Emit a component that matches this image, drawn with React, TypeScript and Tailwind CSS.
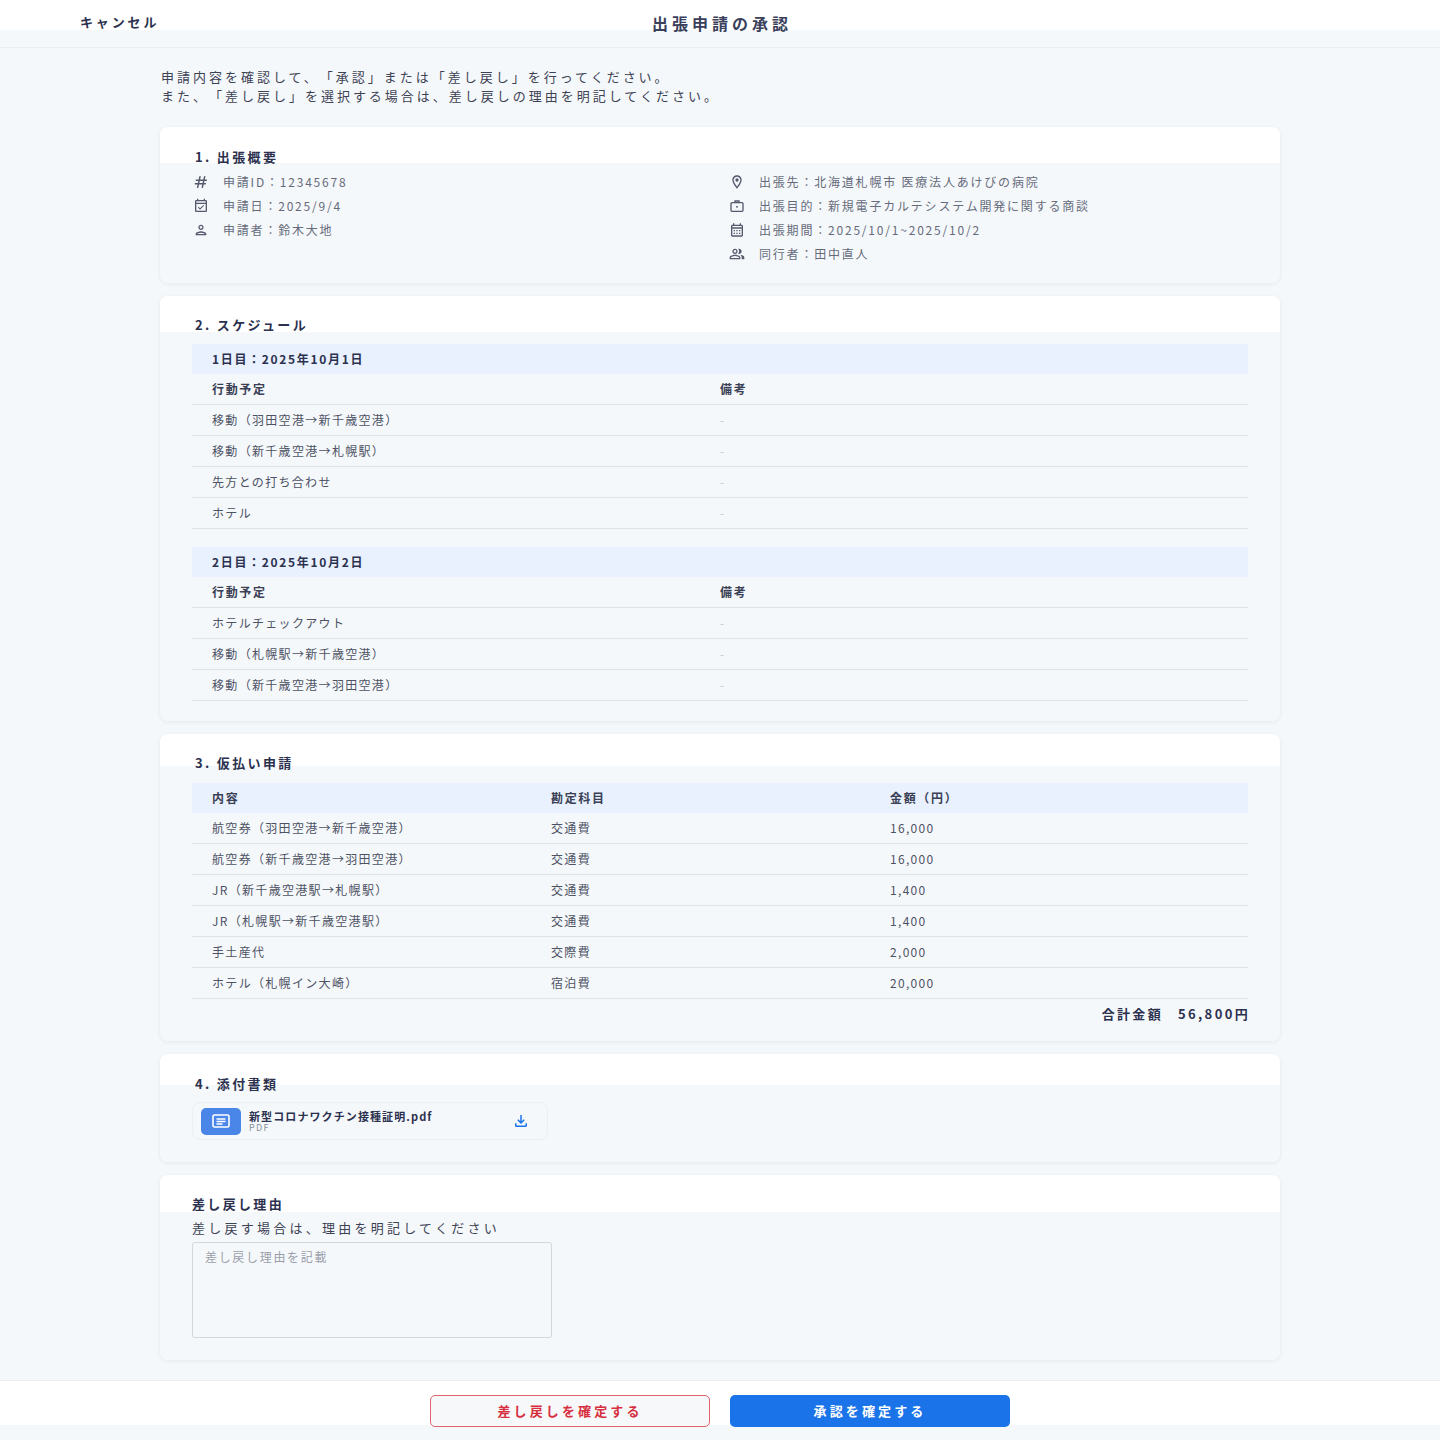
import type { ReactNode } from "react";
import {
  MdOutlineEventAvailable,
  MdOutlinePerson,
  MdOutlineLocationOn,
  MdOutlineCalendarMonth,
  MdOutlinePeopleAlt,
  MdOutlineFileDownload,
} from "react-icons/md";

const HashIcon = () => (
  <svg width="16" height="16" viewBox="0 0 24 24" fill="none" stroke="currentColor" strokeWidth="2.2" strokeLinecap="round">
    <path d="M10.5 4 7 20M17.5 4 14 20M5 9.5h15M3.5 14.5h15" />
  </svg>
);

const BriefcaseIcon = () => (
  <svg width="16" height="16" viewBox="0 0 24 24" fill="none" stroke="currentColor" strokeWidth="2">
    <rect x="3" y="7" width="18" height="13" rx="1.5" />
    <path d="M9 7V4.5h6V7" />
    <rect x="10.8" y="12" width="2.4" height="2.4" fill="currentColor" stroke="none" />
  </svg>
);

const DocIcon = () => (
  <svg width="18" height="14" viewBox="0 0 18 14" fill="none" stroke="#ffffff" strokeWidth="1.6">
    <rect x="1" y="1" width="16" height="12" rx="1.5" />
    <path d="M4.5 5h9M4.5 7.5h9M4.5 10h6" />
  </svg>
);

const Card = ({ className, children }: { className: string; children: ReactNode }) => (
  <section className={`rounded-lg px-8 shadow-[0_1px_4px_rgba(15,23,42,0.07)] ${className}`}>{children}</section>
);

const Heading = ({ children, offset = true }: { children: ReactNode; offset?: boolean }) => (
  <h2 className={`text-[13px] leading-[18px] font-bold tracking-[0.18em] text-[#2c3150] ${offset ? "pl-[3px]" : ""}`}>
    {children}
  </h2>
);

const InfoRow = ({ icon, text }: { icon: ReactNode; text: string }) => (
  <div className="flex h-[24px] items-center gap-[14px] pl-[1px]">
    <span className="flex w-4 justify-center text-[#555a6e]">{icon}</span>
    <span className="text-[12px] tracking-[0.15em] text-[#666b7c]">{text}</span>
  </div>
);

const day1 = ["移動（羽田空港→新千歳空港）", "移動（新千歳空港→札幌駅）", "先方との打ち合わせ", "ホテル"];
const day2 = ["ホテルチェックアウト", "移動（札幌駅→新千歳空港）", "移動（新千歳空港→羽田空港）"];

const expenses = [
  ["航空券（羽田空港→新千歳空港）", "交通費", "16,000"],
  ["航空券（新千歳空港→羽田空港）", "交通費", "16,000"],
  ["JR（新千歳空港駅→札幌駅）", "交通費", "1,400"],
  ["JR（札幌駅→新千歳空港駅）", "交通費", "1,400"],
  ["手土産代", "交際費", "2,000"],
  ["ホテル（札幌イン大崎）", "宿泊費", "20,000"],
];

const DayTable = ({ title, rows }: { title: string; rows: string[] }) => (
  <div>
    <div className="flex h-[30px] items-center bg-[#e8f1fd] pl-5 text-[12px] font-bold tracking-[0.14em] text-[#2c3150]">
      {title}
    </div>
    <div className="grid h-[31px] grid-cols-[528px_1fr] items-center border-b border-[#e3e1e7] text-[12px] font-bold tracking-[0.14em] text-[#3a3f55]">
      <span className="pl-5">行動予定</span>
      <span>備考</span>
    </div>
    {rows.map((r) => (
      <div
        key={r}
        className="grid h-[31px] grid-cols-[528px_1fr] items-center border-b border-[#e3e1e7] text-[12px] tracking-[0.11em] text-[#4d5265]"
      >
        <span className="pl-5">{r}</span>
        <span className="text-[#c4c7cf]">-</span>
      </div>
    ))}
  </div>
);

export default function App() {
  return (
    <div className="min-h-screen bg-[#f5f8fa] font-['Noto_Sans_CJK_JP','Noto_Sans',sans-serif] text-[#3d4255] [text-spacing-trim:space-all]">
      <header className="grid h-[47px] grid-cols-[1fr_auto_1fr] bg-[linear-gradient(to_bottom,#ffffff_30px,#f5f8fa_30px)] shadow-[0_1px_0_#eceff2]">
        <div className="pl-[80px] pt-[12px] text-[13px] leading-[20px] font-bold tracking-[0.22em] text-[#2c3150]">
          キャンセル
        </div>
        <h1 className="pl-[4px] pt-[12px] text-[16px] leading-[22px] font-bold tracking-[0.25em] text-[#3a3f5c]">
          出張申請の承認
        </h1>
        <div />
      </header>

      <main className="mx-auto w-[1120px] pt-[20px]">
        <p className="pl-[1px] text-[13px] leading-[19px] tracking-[0.23em] text-[#3d4255]">
          申請内容を確認して、「承認」または「差し戻し」を行ってください。
          <br />
          また、「差し戻し」を選択する場合は、差し戻しの理由を明記してください。
        </p>

        <div className="mt-[22px] flex flex-col gap-[13px]">
          <Card className="bg-[linear-gradient(to_bottom,#ffffff_36px,#f5f8fa_36px)] pt-[21px] pb-[17px]">
            <Heading>1. 出張概要</Heading>
            <div className="mt-1 grid grid-cols-2 gap-x-4">
              <div>
                <InfoRow icon={<HashIcon />} text="申請ID：12345678" />
                <InfoRow icon={<MdOutlineEventAvailable size={16} />} text="申請日：2025/9/4" />
                <InfoRow icon={<MdOutlinePerson size={16} />} text="申請者：鈴木大地" />
              </div>
              <div>
                <InfoRow icon={<MdOutlineLocationOn size={16} />} text="出張先：北海道札幌市 医療法人あけびの病院" />
                <InfoRow icon={<BriefcaseIcon />} text="出張目的：新規電子カルテシステム開発に関する商談" />
                <InfoRow icon={<MdOutlineCalendarMonth size={16} />} text="出張期間：2025/10/1~2025/10/2" />
                <InfoRow icon={<MdOutlinePeopleAlt size={16} />} text="同行者：田中直人" />
              </div>
            </div>
          </Card>

          <Card className="bg-[linear-gradient(to_bottom,#ffffff_36px,#f5f8fa_36px)] pt-[20px] pb-[20px]">
            <Heading>2. スケジュール</Heading>
            <div className="mt-[10px] flex flex-col gap-[18px]">
              <DayTable title="1日目：2025年10月1日" rows={day1} />
              <DayTable title="2日目：2025年10月2日" rows={day2} />
            </div>
          </Card>

          <Card className="bg-[linear-gradient(to_bottom,#ffffff_32px,#f5f8fa_32px)] pt-[20px] pb-[12px]">
            <Heading>3. 仮払い申請</Heading>
            <div className="mt-[11px]">
              <div className="grid h-[30px] grid-cols-[339px_339px_1fr] items-center bg-[#e8f1fd] text-[12px] font-bold tracking-[0.14em] text-[#3a3f55]">
                <span className="pl-5">内容</span>
                <span className="pl-5">勘定科目</span>
                <span className="pl-5">金額（円）</span>
              </div>
              {expenses.map(([a, b, c]) => (
                <div
                  key={a}
                  className="grid h-[31px] grid-cols-[339px_339px_1fr] items-center border-b border-[#e3e1e7] text-[12px] tracking-[0.11em] text-[#4d5265]"
                >
                  <span className="pl-5">{a}</span>
                  <span className="pl-5">{b}</span>
                  <span className="pl-5">{c}</span>
                </div>
              ))}
              <div className="flex h-[30px] items-center justify-end gap-[15px] text-[13px] font-bold tracking-[0.18em] text-[#2c3150]">
                <span>合計金額</span>
                <span className="-mr-[2px]">56,800円</span>
              </div>
            </div>
          </Card>

          <Card className="bg-[linear-gradient(to_bottom,#ffffff_31px,#f5f8fa_31px)] pt-[21px] pb-[22px]">
            <Heading>4. 添付書類</Heading>
            <div className="mt-[9px] flex h-[38px] w-[356px] items-center gap-2 rounded-lg border border-[#eceef2] pr-[17px] pl-2">
              <div className="flex h-[27px] w-10 items-center justify-center rounded-[5px] bg-[#4a86e8]">
                <DocIcon />
              </div>
              <div className="flex flex-1 flex-col">
                <span className="text-[11px] leading-[13px] font-bold tracking-[0.1em] text-[#2c3150]">
                  新型コロナワクチン接種証明.pdf
                </span>
                <span className="text-[9px] leading-[10px] tracking-[0.15em] text-[#8a8f9c]">PDF</span>
              </div>
              <MdOutlineFileDownload size={18} className="text-[#1a73e8]" />
            </div>
          </Card>

          <Card className="bg-[linear-gradient(to_bottom,#ffffff_37px,#f5f8fa_37px)] pt-[20px] pb-[22px]">
            <Heading offset={false}>差し戻し理由</Heading>
            <p className="mt-[5px] text-[13px] leading-[20px] tracking-[0.25em] text-[#3d4255]">
              差し戻す場合は、理由を明記してください
            </p>
            <textarea
              placeholder="差し戻し理由を記載"
              className="mt-[4px] block h-[96px] w-[360px] resize-none rounded-[3px] border border-[#d3d6dc] bg-transparent px-3 py-[5px] text-[12px] tracking-[0.14em] text-[#3d4255] placeholder:text-[#9a9eaa] focus:outline-none"
            />
          </Card>
        </div>
      </main>

      <footer className="mt-[21px] flex h-[59px] justify-center gap-5 bg-[linear-gradient(to_bottom,#ffffff_44px,#f5f8fa_44px)] pt-[14px] shadow-[0_-1px_0_#eceff2]">
        <button className="h-[32px] w-[280px] rounded-[5px] border border-[#e0646e] bg-[#f6f8fa] text-[13px] font-bold tracking-[0.24em] text-[#d6303f]">
          差し戻しを確定する
        </button>
        <button className="h-[32px] w-[280px] rounded-[5px] bg-[#1a73e8] text-[13px] font-bold tracking-[0.24em] text-white">
          承認を確定する
        </button>
      </footer>
    </div>
  );
}
